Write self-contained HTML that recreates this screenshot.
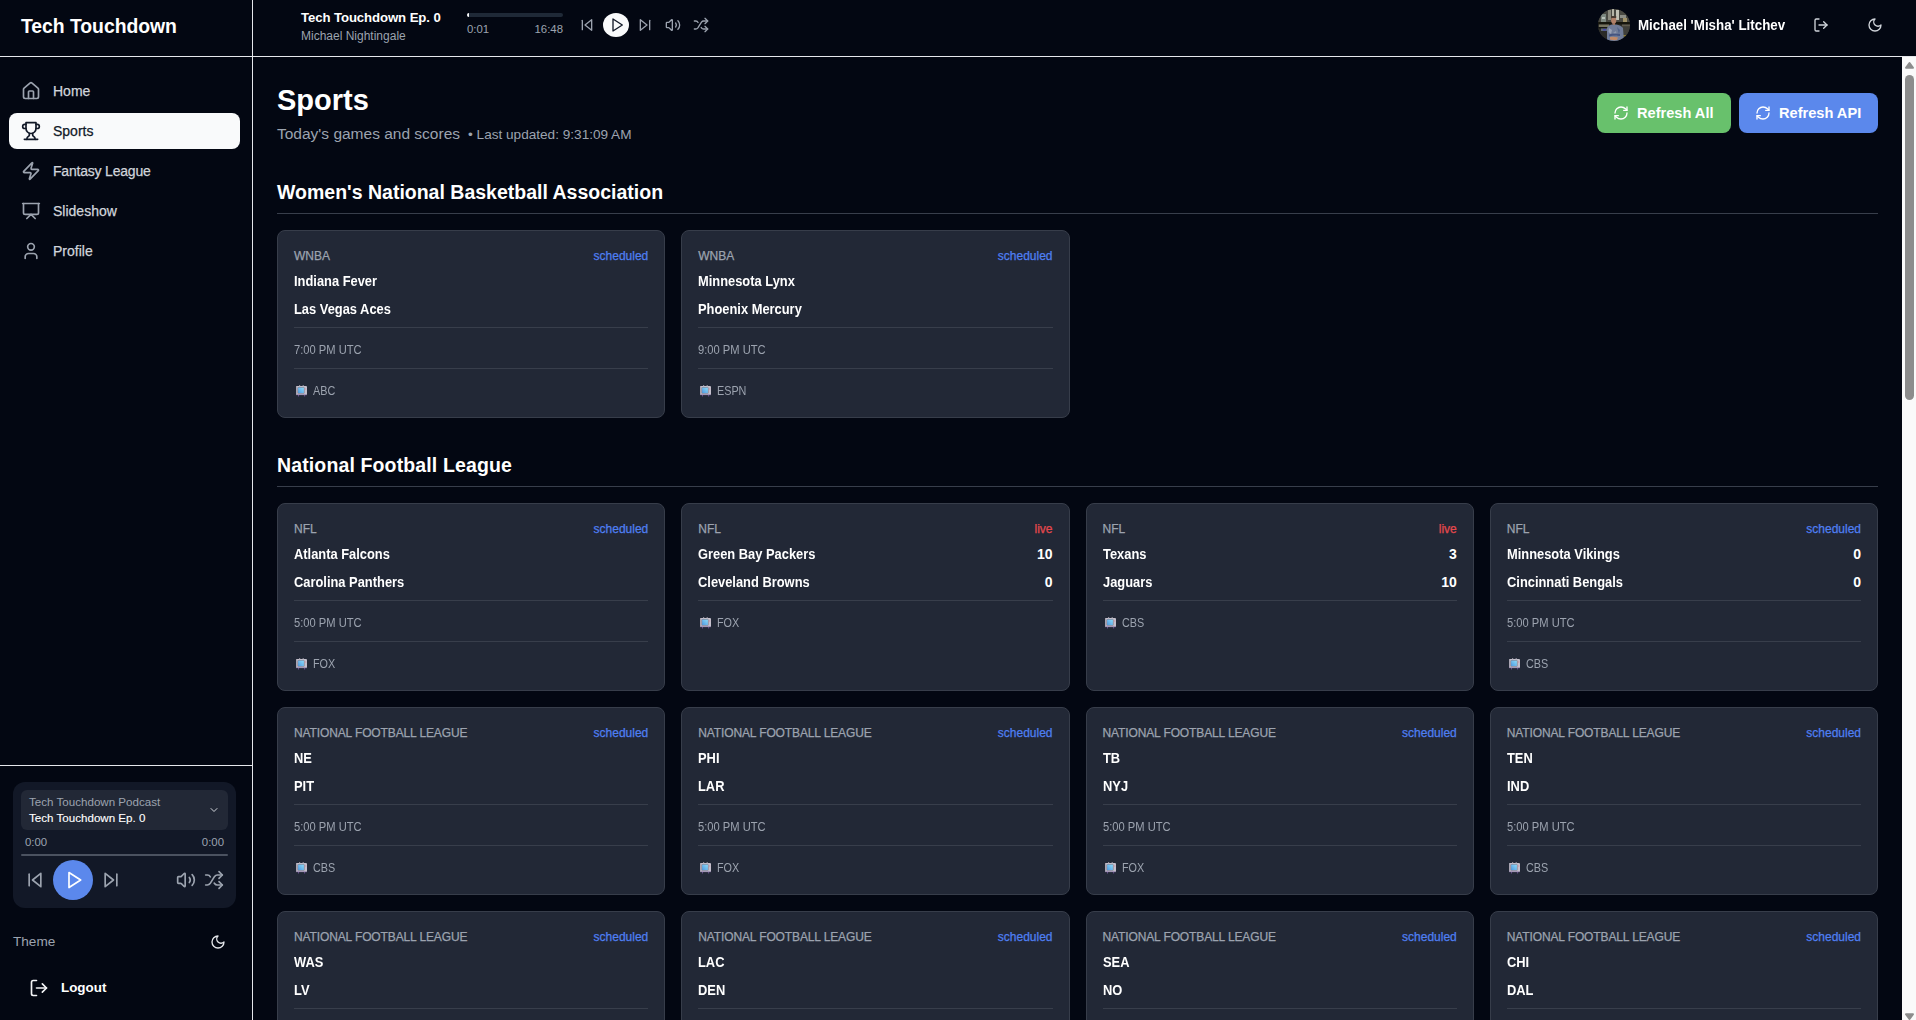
<!DOCTYPE html>
<html><head><meta charset="utf-8">
<style>
*{box-sizing:border-box;margin:0;padding:0}
html,body{width:1916px;height:1020px;overflow:hidden;background:#030712;font-family:"Liberation Sans",sans-serif;color:#f9fafb}
svg.i{fill:none;stroke:currentColor;stroke-width:2;stroke-linecap:round;stroke-linejoin:round;display:block}
.abs{position:absolute}
#sb{position:absolute;left:0;top:0;width:253px;height:1020px;border-right:1px solid #e5e7eb}
#logo{height:57px;border-bottom:1px solid #e5e7eb;position:relative}
#logo span{position:absolute;left:21px;top:14px;font-size:19.4px;font-weight:700;line-height:24px;color:#fff;letter-spacing:-0.05px}
.nav{position:absolute;left:9px;width:231px;height:36px;border-radius:8px;color:#d1d5db}
.nav svg{position:absolute;left:12px;top:8px;width:20px;height:20px;color:#9ca3af}
.nav span{position:absolute;left:44px;top:9px;font-size:14px;line-height:18px;-webkit-text-stroke:0.25px currentColor;white-space:nowrap}
.nav.act{background:#f9fafb;color:#111827}
.nav.act svg{color:#111827}
#hdr{position:absolute;left:253px;top:0;width:1663px;height:57px;border-bottom:1px solid #e5e7eb}

#main{position:absolute;left:253px;top:57px;width:1649px;height:963px;overflow:hidden}
#ttl{position:absolute;left:24px;top:25px;font-size:29px;font-weight:700;line-height:36px;color:#fff;white-space:nowrap}
#sub{position:absolute;left:24px;top:67px;font-size:15.5px;line-height:20px;color:#9ca3af;white-space:nowrap}
#upd{font-size:13.6px;margin-left:8px}
.btn{position:absolute;top:36px;height:40px;border-radius:8px;color:#fff}
.btn svg{position:absolute;left:16px;top:12px;width:16px;height:16px}
.btn span{position:absolute;left:40px;top:11px;font-size:14.6px;font-weight:700;line-height:18px;white-space:nowrap}
.sect{position:absolute;left:24px;width:1601px}
.sh{height:37px;border-bottom:1px solid #383e4b;font-size:19.5px;font-weight:700;line-height:28px;padding-top:1px;color:#fff;white-space:nowrap}
.grid{margin-top:16px;display:grid;grid-template-columns:repeat(4,1fr);gap:16px}
.card{background:#222836;border:1px solid #373d4a;border-radius:8px;padding:16px}
.ctop{height:16px;position:relative;font-size:12px;line-height:16px}
.lg{color:#9ca3af;position:absolute;left:0;top:1px;-webkit-text-stroke:0.25px #9ca3af;white-space:nowrap}
.lg.lc{letter-spacing:-0.12px}
.sch,.live{position:absolute;right:0;top:1px;color:#4f7ff2;-webkit-text-stroke:0.25px #4f7ff2}
.live{color:#e5484d;-webkit-text-stroke:0.25px #e5484d}
.team{margin-top:8px;height:20px;position:relative;font-size:14px;font-weight:700;line-height:20px;color:#fff}
.team span{position:absolute;left:0;top:0;white-space:nowrap;transform:scaleX(0.92);transform-origin:0 0}
.team b{position:absolute;right:0;top:0}
.sec{margin-top:8px;border-top:1px solid #383e4b;padding-top:12px;height:41px;position:relative}
.sec + .sec{margin-top:0}
.sec.ch{height:33px}
.tm{font-size:12px;line-height:16px;color:#9ca3af;position:absolute;left:0;top:14px;white-space:nowrap;transform:scaleX(0.93);transform-origin:0 0}
.ch span{font-size:12px;line-height:20px;color:#9ca3af;position:absolute;left:19px;top:12px;transform:scaleX(0.9);transform-origin:0 0}
.tv{position:absolute;left:2px;top:16px;width:11px;height:12px}
</style></head><body>
<div id="sb">
  <div id="logo"><span>Tech Touchdown</span></div>
  <div class="nav" style="top:73px"><svg class="i" viewBox="0 0 24 24"><path d="M15 21v-8a1 1 0 0 0-1-1h-4a1 1 0 0 0-1 1v8"/><path d="M3 10a2 2 0 0 1 .709-1.528l7-5.999a2 2 0 0 1 2.582 0l7 5.999A2 2 0 0 1 21 10v9a2 2 0 0 1-2 2H5a2 2 0 0 1-2-2z"/></svg><span>Home</span></div>
  <div class="nav act" style="top:113px"><svg class="i" viewBox="0 0 24 24"><path d="M6 9H4.5a2.5 2.5 0 0 1 0-5H6"/><path d="M18 9h1.5a2.5 2.5 0 0 0 0-5H18"/><path d="M4 22h16"/><path d="M10 14.66V17c0 .55-.47.98-.97 1.21C7.85 18.75 7 20.24 7 22"/><path d="M14 14.66V17c0 .55.47.98.97 1.21C16.150 18.75 17 20.24 17 22"/><path d="M18 2H6v7a6 6 0 0 0 12 0V2Z"/></svg><span>Sports</span></div>
  <div class="nav" style="top:153px"><svg class="i" viewBox="0 0 24 24"><path d="M4 14a1 1 0 0 1-.78-1.63l9.9-10.2a.5.5 0 0 1 .86.46l-1.92 6.02A1 1 0 0 0 13 10h7a1 1 0 0 1 .78 1.63l-9.9 10.2a.5.5 0 0 1-.86-.46l1.920-6.02A1 1 0 0 0 11 14z"/></svg><span style="letter-spacing:-0.2px">Fantasy League</span></div>
  <div class="nav" style="top:193px"><svg class="i" viewBox="0 0 24 24"><path d="M2 3h20"/><path d="M21 3v11a2 2 0 0 1-2 2H5a2 2 0 0 1-2-2V3"/><path d="m7 21 5-5 5 5"/></svg><span>Slideshow</span></div>
  <div class="nav" style="top:233px"><svg class="i" viewBox="0 0 24 24"><path d="M19 21v-2a4 4 0 0 0-4-4H9a4 4 0 0 0-4 4v2"/><circle cx="12" cy="7" r="4"/></svg><span>Profile</span></div>
  
  <div class="abs" style="left:0;top:765px;width:252px;height:1px;background:#e5e7eb"></div>
  <div class="abs" style="left:13px;top:782px;width:223px;height:126px;border-radius:12px;background:#121827"></div>
  <div class="abs" style="left:21px;top:790px;width:207px;height:40px;border-radius:6px;background:#222836"></div>
  <div class="abs" style="left:29px;top:795px;font-size:11.6px;line-height:14px;color:#9ca3af;white-space:nowrap">Tech Touchdown Podcast</div>
  <div class="abs" style="left:29px;top:811px;font-size:11.6px;line-height:14px;color:#fff;white-space:nowrap;-webkit-text-stroke:0.12px #fff">Tech Touchdown Ep. 0</div>
  <svg class="i abs" style="left:208px;top:804px;width:12px;height:12px;color:#d1d5db" viewBox="0 0 24 24"><path d="m6 9 6 6 6-6"/></svg>
  <div class="abs" style="left:25px;top:835px;font-size:11.4px;line-height:14px;color:#9ca3af">0:00</div>
  <div class="abs" style="left:200px;top:835px;width:24px;text-align:right;font-size:11.4px;line-height:14px;color:#9ca3af">0:00</div>
  <div class="abs" style="left:21px;top:854px;width:207px;height:2px;background:#4b5260;border-radius:1px"></div>
  <svg class="i abs" style="left:25px;top:870px;width:20px;height:20px;color:#9ca3af" viewBox="0 0 24 24"><polygon points="19 20 9 12 19 4 19 20"/><line x1="5" x2="5" y1="19" y2="5"/></svg>
  <div class="abs" style="left:53px;top:860px;width:40px;height:40px;border-radius:50%;background:#5b88ec"></div>
  <svg class="i abs" style="left:64px;top:870px;width:20px;height:20px;color:#fff" viewBox="0 0 24 24"><polygon points="6 3 20 12 6 21 6 3"/></svg>
  <svg class="i abs" style="left:101px;top:870px;width:20px;height:20px;color:#9ca3af" viewBox="0 0 24 24"><polygon points="5 4 15 12 5 20 5 4"/><line x1="19" x2="19" y1="5" y2="19"/></svg>
  <svg class="i abs" style="left:176px;top:870px;width:20px;height:20px;color:#9ca3af" viewBox="0 0 24 24"><path d="M11 4.702a.705.705 0 0 0-1.203-.498L6.413 7.587A1.4 1.4 0 0 1 5.416 8H3a1 1 0 0 0-1 1v6a1 1 0 0 0 1 1h2.416a1.4 1.4 0 0 1 .997.413l3.383 3.384A.705.705 0 0 0 11 19.298z"/><path d="M16 9a5 5 0 0 1 0 6"/><path d="M19.364 18.364a9 9 0 0 0 0-12.728"/></svg>
  <svg class="i abs" style="left:204px;top:870px;width:20px;height:20px;color:#9ca3af" viewBox="0 0 24 24"><path d="m18 14 4 4-4 4"/><path d="m18 2 4 4-4 4"/><path d="M2 18h1.973a4 4 0 0 0 3.3-1.7l5.454-8.6a4 4 0 0 1 3.3-1.7H22"/><path d="M2 6h1.972a4 4 0 0 1 3.6 2.2"/><path d="M22 18h-6.041a4 4 0 0 1-3.3-1.8l-.359-.45"/></svg>
  <div class="abs" style="left:13px;top:934px;font-size:13.6px;line-height:16px;color:#9ca3af">Theme</div>
  <svg class="i abs" style="left:210px;top:934px;width:16px;height:16px;color:#e5e7eb" viewBox="0 0 24 24"><path d="M12 3a6 6 0 0 0 9 9 9 9 0 1 1-9-9Z"/></svg>
  <svg class="i abs" style="left:29px;top:978px;width:20px;height:20px;color:#f3f4f6" viewBox="0 0 24 24"><path d="M9 21H5a2 2 0 0 1-2-2V5a2 2 0 0 1 2-2h4"/><polyline points="16 17 21 12 16 7"/><line x1="21" x2="9" y1="12" y2="12"/></svg>
  <div class="abs" style="left:61px;top:980px;font-size:13.4px;font-weight:700;line-height:16px;color:#fff">Logout</div>

</div>
<div id="hdr">
  
  <div class="abs" style="left:48px;top:9px;font-size:13.2px;font-weight:700;line-height:17px;color:#fff;letter-spacing:-0.1px;white-space:nowrap">Tech Touchdown Ep. 0</div>
  <div class="abs" style="left:48px;top:29px;font-size:12px;line-height:14px;color:#9ca3af;white-space:nowrap">Michael Nightingale</div>
  <div class="abs" style="left:214px;top:13px;width:96px;height:4px;border-radius:2px;background:#1f2937;overflow:hidden"><div style="width:2px;height:4px;background:#f9fafb"></div></div>
  <div class="abs" style="left:214px;top:22px;width:96px;font-size:11.4px;line-height:14px;color:#9ca3af;white-space:nowrap">0:01<span style="position:absolute;right:0;top:0">16:48</span></div>
  <svg class="i abs" style="left:326px;top:17px;width:16px;height:16px;color:#9ca3af" viewBox="0 0 24 24"><polygon points="19 20 9 12 19 4 19 20"/><line x1="5" x2="5" y1="19" y2="5"/></svg>
  <div class="abs" style="left:350px;top:13px;width:26px;height:24px;border-radius:50%;background:#f9fafb"></div>
  <svg class="i abs" style="left:356px;top:17px;width:16px;height:16px;color:#111827" viewBox="0 0 24 24"><polygon points="6 3 20 12 6 21 6 3"/></svg>
  <svg class="i abs" style="left:384px;top:17px;width:16px;height:16px;color:#9ca3af" viewBox="0 0 24 24"><polygon points="5 4 15 12 5 20 5 4"/><line x1="19" x2="19" y1="5" y2="19"/></svg>
  <svg class="i abs" style="left:412px;top:17px;width:16px;height:16px;color:#9ca3af" viewBox="0 0 24 24"><path d="M11 4.702a.705.705 0 0 0-1.203-.498L6.413 7.587A1.4 1.4 0 0 1 5.416 8H3a1 1 0 0 0-1 1v6a1 1 0 0 0 1 1h2.416a1.4 1.4 0 0 1 .997.413l3.383 3.384A.705.705 0 0 0 11 19.298z"/><path d="M16 9a5 5 0 0 1 0 6"/><path d="M19.364 18.364a9 9 0 0 0 0-12.728"/></svg>
  <svg class="i abs" style="left:440px;top:17px;width:16px;height:16px;color:#9ca3af" viewBox="0 0 24 24"><path d="m18 14 4 4-4 4"/><path d="m18 2 4 4-4 4"/><path d="M2 18h1.973a4 4 0 0 0 3.3-1.7l5.454-8.6a4 4 0 0 1 3.3-1.7H22"/><path d="M2 6h1.972a4 4 0 0 1 3.6 2.2"/><path d="M22 18h-6.041a4 4 0 0 1-3.3-1.8l-.359-.45"/></svg>
  <div class="abs" style="left:1345px;top:9px;width:32px;height:32px;border-radius:50%;overflow:hidden;background:#2e2e2a"><svg width="32" height="32" viewBox="0 0 32 32" style="display:block"><defs><filter id="bl" x="-10%" y="-10%" width="120%" height="120%"><feGaussianBlur stdDeviation="0.5"/></filter></defs><g filter="url(#bl)">
<rect width="32" height="32" fill="#2e2e2a"/>
<rect x="0" y="0" width="32" height="13" fill="#4a4a42"/>
<rect x="3" y="5" width="5" height="8" fill="#7d8880"/>
<rect x="4" y="8" width="3" height="2" fill="#b8c0b8"/>
<rect x="10" y="1" width="3" height="10" fill="#8a897c"/>
<rect x="14" y="0" width="2" height="8" fill="#b5b4a6"/>
<rect x="18" y="1" width="3" height="10" fill="#c2c1b4"/>
<rect x="22" y="6" width="6" height="3" fill="#8c8e86"/>
<rect x="25" y="9" width="4" height="5" fill="#a09268"/>
<rect x="0" y="13" width="32" height="2.5" fill="#121210"/>
<rect x="1" y="15.5" width="10" height="2.5" fill="#77745f"/>
<rect x="24" y="15.5" width="8" height="2" fill="#5f5b50"/>
<rect x="0" y="18" width="10" height="1.5" fill="#161614"/>
<rect x="3" y="19.5" width="7" height="2.5" fill="#5d6a78"/>
<rect x="5" y="20" width="3" height="1.5" fill="#4848b0"/>
<rect x="0" y="22" width="10" height="10" fill="#2a2a26"/>
<rect x="24" y="18" width="8" height="14" fill="#3f413b"/>
<rect x="25" y="26" width="5" height="1.5" fill="#8c7a36"/>
<path d="M9 32 L9 19 Q10 16 14 15.5 L18 15.5 Q23 16 25 19 L26 32 Z" fill="#6f7c98"/>
<path d="M11 19 L14 21 L13 25 L10.5 23 Z" fill="#98a2b6"/>
<path d="M19 18 L22 21 L21 25 Z" fill="#53638a"/>
<path d="M15 24 L18 22 L19 27 Z" fill="#8e98ae"/>
<ellipse cx="15.7" cy="11.3" rx="2.6" ry="3.6" fill="#b08068"/>
<rect x="13.2" y="7" width="5" height="2" fill="#4a3a30"/>
<rect x="14.6" y="14" width="2.4" height="2" fill="#9c7460"/>
<path d="M11 25.5 Q16 24 22 25 L22 27 Q16 26 11 27.5 Z" fill="#445480"/>
<path d="M12 28 Q16 27.5 20 28.5 L19 31 Q15 31.5 12 30.5 Z" fill="#c08a68"/>
</g></svg></div>
  <div class="abs" style="left:1385px;top:17px;font-size:14.2px;font-weight:700;line-height:17px;color:#fff;white-space:nowrap;transform:scaleX(0.94);transform-origin:0 0">Michael 'Misha' Litchev</div>
  <svg class="i abs" style="left:1560px;top:17px;width:16px;height:16px;color:#d1d5db" viewBox="0 0 24 24"><path d="M9 21H5a2 2 0 0 1-2-2V5a2 2 0 0 1 2-2h4"/><polyline points="16 17 21 12 16 7"/><line x1="21" x2="9" y1="12" y2="12"/></svg>
  <svg class="i abs" style="left:1614px;top:17px;width:16px;height:16px;color:#d1d5db" viewBox="0 0 24 24"><path d="M12 3a6 6 0 0 0 9 9 9 9 0 1 1-9-9Z"/></svg>

</div>
<div id="main">
  
  <div id="ttl">Sports</div>
  <div id="sub">Today's games and scores<span id="upd">&bull; Last updated: 9:31:09 AM</span></div>
  <div class="btn" style="left:1344px;width:134px;background:#68c16c"><svg class="i" viewBox="0 0 24 24"><path d="M3 12a9 9 0 0 1 9-9 9.75 9.75 0 0 1 6.74 2.74L21 8"/><path d="M21 3v5h-5"/><path d="M21 12a9 9 0 0 1-9 9 9.75 9.75 0 0 1-6.74-2.74L3 16"/><path d="M8 16H3v5"/></svg><span>Refresh All</span></div>
  <div class="btn" style="left:1486px;width:139px;background:#5b88ec"><svg class="i" viewBox="0 0 24 24"><path d="M3 12a9 9 0 0 1 9-9 9.75 9.75 0 0 1 6.74 2.74L21 8"/><path d="M21 3v5h-5"/><path d="M21 12a9 9 0 0 1-9 9 9.75 9.75 0 0 1-6.74-2.74L3 16"/><path d="M8 16H3v5"/></svg><span>Refresh API</span></div>
  <div class="sect" style="top:120px"><div class="sh">Women's National Basketball Association</div><div class="grid"><div class="card"><div class="ctop"><span class="lg">WNBA</span><span class="sch">scheduled</span></div><div class="team"><span>Indiana Fever</span></div><div class="team t2"><span>Las Vegas Aces</span></div><div class="sec"><span class="tm">7:00 PM UTC</span></div><div class="sec ch"><svg class="tv" viewBox="0 0 11 12"><defs><linearGradient id="scr" x1="0" y1="1" x2="1" y2="0"><stop offset="0" stop-color="#4f9ae0"/><stop offset="1" stop-color="#8edcfa"/></linearGradient></defs><rect x="0" y="1" width="11" height="9" rx="1" fill="#c4c0cc"/><rect x="0" y="1.5" width="1.2" height="8" fill="#a9a5b2"/><rect x="1.6" y="2.2" width="6.8" height="6.3" rx="0.5" fill="#6f6a7c"/><rect x="2.1" y="2.6" width="5.8" height="5.5" fill="url(#scr)"/><rect x="9.2" y="3.6" width="1" height="0.8" fill="#e0708a"/><rect x="0" y="9.2" width="11" height="0.9" fill="#9b8db0"/><rect x="3" y="0.2" width="1.2" height="1.2" fill="#aaa6b4"/><rect x="6.6" y="0.2" width="1.2" height="1.2" fill="#aaa6b4"/><rect x="2" y="10" width="0.8" height="1.5" fill="#7a5aa6"/><rect x="8.3" y="10" width="0.8" height="1.5" fill="#7a5aa6"/></svg><span>ABC</span></div></div><div class="card"><div class="ctop"><span class="lg">WNBA</span><span class="sch">scheduled</span></div><div class="team"><span>Minnesota Lynx</span></div><div class="team t2"><span>Phoenix Mercury</span></div><div class="sec"><span class="tm">9:00 PM UTC</span></div><div class="sec ch"><svg class="tv" viewBox="0 0 11 12"><defs><linearGradient id="scr" x1="0" y1="1" x2="1" y2="0"><stop offset="0" stop-color="#4f9ae0"/><stop offset="1" stop-color="#8edcfa"/></linearGradient></defs><rect x="0" y="1" width="11" height="9" rx="1" fill="#c4c0cc"/><rect x="0" y="1.5" width="1.2" height="8" fill="#a9a5b2"/><rect x="1.6" y="2.2" width="6.8" height="6.3" rx="0.5" fill="#6f6a7c"/><rect x="2.1" y="2.6" width="5.8" height="5.5" fill="url(#scr)"/><rect x="9.2" y="3.6" width="1" height="0.8" fill="#e0708a"/><rect x="0" y="9.2" width="11" height="0.9" fill="#9b8db0"/><rect x="3" y="0.2" width="1.2" height="1.2" fill="#aaa6b4"/><rect x="6.6" y="0.2" width="1.2" height="1.2" fill="#aaa6b4"/><rect x="2" y="10" width="0.8" height="1.5" fill="#7a5aa6"/><rect x="8.3" y="10" width="0.8" height="1.5" fill="#7a5aa6"/></svg><span>ESPN</span></div></div></div></div>
  <div class="sect" style="top:393px"><div class="sh" style="letter-spacing:0.13px">National Football League</div><div class="grid"><div class="card"><div class="ctop"><span class="lg">NFL</span><span class="sch">scheduled</span></div><div class="team"><span>Atlanta Falcons</span></div><div class="team t2"><span>Carolina Panthers</span></div><div class="sec"><span class="tm">5:00 PM UTC</span></div><div class="sec ch"><svg class="tv" viewBox="0 0 11 12"><defs><linearGradient id="scr" x1="0" y1="1" x2="1" y2="0"><stop offset="0" stop-color="#4f9ae0"/><stop offset="1" stop-color="#8edcfa"/></linearGradient></defs><rect x="0" y="1" width="11" height="9" rx="1" fill="#c4c0cc"/><rect x="0" y="1.5" width="1.2" height="8" fill="#a9a5b2"/><rect x="1.6" y="2.2" width="6.8" height="6.3" rx="0.5" fill="#6f6a7c"/><rect x="2.1" y="2.6" width="5.8" height="5.5" fill="url(#scr)"/><rect x="9.2" y="3.6" width="1" height="0.8" fill="#e0708a"/><rect x="0" y="9.2" width="11" height="0.9" fill="#9b8db0"/><rect x="3" y="0.2" width="1.2" height="1.2" fill="#aaa6b4"/><rect x="6.6" y="0.2" width="1.2" height="1.2" fill="#aaa6b4"/><rect x="2" y="10" width="0.8" height="1.5" fill="#7a5aa6"/><rect x="8.3" y="10" width="0.8" height="1.5" fill="#7a5aa6"/></svg><span>FOX</span></div></div><div class="card"><div class="ctop"><span class="lg">NFL</span><span class="live">live</span></div><div class="team"><span>Green Bay Packers</span><b>10</b></div><div class="team t2"><span>Cleveland Browns</span><b>0</b></div><div class="sec ch"><svg class="tv" viewBox="0 0 11 12"><defs><linearGradient id="scr" x1="0" y1="1" x2="1" y2="0"><stop offset="0" stop-color="#4f9ae0"/><stop offset="1" stop-color="#8edcfa"/></linearGradient></defs><rect x="0" y="1" width="11" height="9" rx="1" fill="#c4c0cc"/><rect x="0" y="1.5" width="1.2" height="8" fill="#a9a5b2"/><rect x="1.6" y="2.2" width="6.8" height="6.3" rx="0.5" fill="#6f6a7c"/><rect x="2.1" y="2.6" width="5.8" height="5.5" fill="url(#scr)"/><rect x="9.2" y="3.6" width="1" height="0.8" fill="#e0708a"/><rect x="0" y="9.2" width="11" height="0.9" fill="#9b8db0"/><rect x="3" y="0.2" width="1.2" height="1.2" fill="#aaa6b4"/><rect x="6.6" y="0.2" width="1.2" height="1.2" fill="#aaa6b4"/><rect x="2" y="10" width="0.8" height="1.5" fill="#7a5aa6"/><rect x="8.3" y="10" width="0.8" height="1.5" fill="#7a5aa6"/></svg><span>FOX</span></div></div><div class="card"><div class="ctop"><span class="lg">NFL</span><span class="live">live</span></div><div class="team"><span>Texans</span><b>3</b></div><div class="team t2"><span>Jaguars</span><b>10</b></div><div class="sec ch"><svg class="tv" viewBox="0 0 11 12"><defs><linearGradient id="scr" x1="0" y1="1" x2="1" y2="0"><stop offset="0" stop-color="#4f9ae0"/><stop offset="1" stop-color="#8edcfa"/></linearGradient></defs><rect x="0" y="1" width="11" height="9" rx="1" fill="#c4c0cc"/><rect x="0" y="1.5" width="1.2" height="8" fill="#a9a5b2"/><rect x="1.6" y="2.2" width="6.8" height="6.3" rx="0.5" fill="#6f6a7c"/><rect x="2.1" y="2.6" width="5.8" height="5.5" fill="url(#scr)"/><rect x="9.2" y="3.6" width="1" height="0.8" fill="#e0708a"/><rect x="0" y="9.2" width="11" height="0.9" fill="#9b8db0"/><rect x="3" y="0.2" width="1.2" height="1.2" fill="#aaa6b4"/><rect x="6.6" y="0.2" width="1.2" height="1.2" fill="#aaa6b4"/><rect x="2" y="10" width="0.8" height="1.5" fill="#7a5aa6"/><rect x="8.3" y="10" width="0.8" height="1.5" fill="#7a5aa6"/></svg><span>CBS</span></div></div><div class="card"><div class="ctop"><span class="lg">NFL</span><span class="sch">scheduled</span></div><div class="team"><span>Minnesota Vikings</span><b>0</b></div><div class="team t2"><span>Cincinnati Bengals</span><b>0</b></div><div class="sec"><span class="tm">5:00 PM UTC</span></div><div class="sec ch"><svg class="tv" viewBox="0 0 11 12"><defs><linearGradient id="scr" x1="0" y1="1" x2="1" y2="0"><stop offset="0" stop-color="#4f9ae0"/><stop offset="1" stop-color="#8edcfa"/></linearGradient></defs><rect x="0" y="1" width="11" height="9" rx="1" fill="#c4c0cc"/><rect x="0" y="1.5" width="1.2" height="8" fill="#a9a5b2"/><rect x="1.6" y="2.2" width="6.8" height="6.3" rx="0.5" fill="#6f6a7c"/><rect x="2.1" y="2.6" width="5.8" height="5.5" fill="url(#scr)"/><rect x="9.2" y="3.6" width="1" height="0.8" fill="#e0708a"/><rect x="0" y="9.2" width="11" height="0.9" fill="#9b8db0"/><rect x="3" y="0.2" width="1.2" height="1.2" fill="#aaa6b4"/><rect x="6.6" y="0.2" width="1.2" height="1.2" fill="#aaa6b4"/><rect x="2" y="10" width="0.8" height="1.5" fill="#7a5aa6"/><rect x="8.3" y="10" width="0.8" height="1.5" fill="#7a5aa6"/></svg><span>CBS</span></div></div><div class="card"><div class="ctop"><span class="lg lc">NATIONAL FOOTBALL LEAGUE</span><span class="sch">scheduled</span></div><div class="team"><span>NE</span></div><div class="team t2"><span>PIT</span></div><div class="sec"><span class="tm">5:00 PM UTC</span></div><div class="sec ch"><svg class="tv" viewBox="0 0 11 12"><defs><linearGradient id="scr" x1="0" y1="1" x2="1" y2="0"><stop offset="0" stop-color="#4f9ae0"/><stop offset="1" stop-color="#8edcfa"/></linearGradient></defs><rect x="0" y="1" width="11" height="9" rx="1" fill="#c4c0cc"/><rect x="0" y="1.5" width="1.2" height="8" fill="#a9a5b2"/><rect x="1.6" y="2.2" width="6.8" height="6.3" rx="0.5" fill="#6f6a7c"/><rect x="2.1" y="2.6" width="5.8" height="5.5" fill="url(#scr)"/><rect x="9.2" y="3.6" width="1" height="0.8" fill="#e0708a"/><rect x="0" y="9.2" width="11" height="0.9" fill="#9b8db0"/><rect x="3" y="0.2" width="1.2" height="1.2" fill="#aaa6b4"/><rect x="6.6" y="0.2" width="1.2" height="1.2" fill="#aaa6b4"/><rect x="2" y="10" width="0.8" height="1.5" fill="#7a5aa6"/><rect x="8.3" y="10" width="0.8" height="1.5" fill="#7a5aa6"/></svg><span>CBS</span></div></div><div class="card"><div class="ctop"><span class="lg lc">NATIONAL FOOTBALL LEAGUE</span><span class="sch">scheduled</span></div><div class="team"><span>PHI</span></div><div class="team t2"><span>LAR</span></div><div class="sec"><span class="tm">5:00 PM UTC</span></div><div class="sec ch"><svg class="tv" viewBox="0 0 11 12"><defs><linearGradient id="scr" x1="0" y1="1" x2="1" y2="0"><stop offset="0" stop-color="#4f9ae0"/><stop offset="1" stop-color="#8edcfa"/></linearGradient></defs><rect x="0" y="1" width="11" height="9" rx="1" fill="#c4c0cc"/><rect x="0" y="1.5" width="1.2" height="8" fill="#a9a5b2"/><rect x="1.6" y="2.2" width="6.8" height="6.3" rx="0.5" fill="#6f6a7c"/><rect x="2.1" y="2.6" width="5.8" height="5.5" fill="url(#scr)"/><rect x="9.2" y="3.6" width="1" height="0.8" fill="#e0708a"/><rect x="0" y="9.2" width="11" height="0.9" fill="#9b8db0"/><rect x="3" y="0.2" width="1.2" height="1.2" fill="#aaa6b4"/><rect x="6.6" y="0.2" width="1.2" height="1.2" fill="#aaa6b4"/><rect x="2" y="10" width="0.8" height="1.5" fill="#7a5aa6"/><rect x="8.3" y="10" width="0.8" height="1.5" fill="#7a5aa6"/></svg><span>FOX</span></div></div><div class="card"><div class="ctop"><span class="lg lc">NATIONAL FOOTBALL LEAGUE</span><span class="sch">scheduled</span></div><div class="team"><span>TB</span></div><div class="team t2"><span>NYJ</span></div><div class="sec"><span class="tm">5:00 PM UTC</span></div><div class="sec ch"><svg class="tv" viewBox="0 0 11 12"><defs><linearGradient id="scr" x1="0" y1="1" x2="1" y2="0"><stop offset="0" stop-color="#4f9ae0"/><stop offset="1" stop-color="#8edcfa"/></linearGradient></defs><rect x="0" y="1" width="11" height="9" rx="1" fill="#c4c0cc"/><rect x="0" y="1.5" width="1.2" height="8" fill="#a9a5b2"/><rect x="1.6" y="2.2" width="6.8" height="6.3" rx="0.5" fill="#6f6a7c"/><rect x="2.1" y="2.6" width="5.8" height="5.5" fill="url(#scr)"/><rect x="9.2" y="3.6" width="1" height="0.8" fill="#e0708a"/><rect x="0" y="9.2" width="11" height="0.9" fill="#9b8db0"/><rect x="3" y="0.2" width="1.2" height="1.2" fill="#aaa6b4"/><rect x="6.6" y="0.2" width="1.2" height="1.2" fill="#aaa6b4"/><rect x="2" y="10" width="0.8" height="1.5" fill="#7a5aa6"/><rect x="8.3" y="10" width="0.8" height="1.5" fill="#7a5aa6"/></svg><span>FOX</span></div></div><div class="card"><div class="ctop"><span class="lg lc">NATIONAL FOOTBALL LEAGUE</span><span class="sch">scheduled</span></div><div class="team"><span>TEN</span></div><div class="team t2"><span>IND</span></div><div class="sec"><span class="tm">5:00 PM UTC</span></div><div class="sec ch"><svg class="tv" viewBox="0 0 11 12"><defs><linearGradient id="scr" x1="0" y1="1" x2="1" y2="0"><stop offset="0" stop-color="#4f9ae0"/><stop offset="1" stop-color="#8edcfa"/></linearGradient></defs><rect x="0" y="1" width="11" height="9" rx="1" fill="#c4c0cc"/><rect x="0" y="1.5" width="1.2" height="8" fill="#a9a5b2"/><rect x="1.6" y="2.2" width="6.8" height="6.3" rx="0.5" fill="#6f6a7c"/><rect x="2.1" y="2.6" width="5.8" height="5.5" fill="url(#scr)"/><rect x="9.2" y="3.6" width="1" height="0.8" fill="#e0708a"/><rect x="0" y="9.2" width="11" height="0.9" fill="#9b8db0"/><rect x="3" y="0.2" width="1.2" height="1.2" fill="#aaa6b4"/><rect x="6.6" y="0.2" width="1.2" height="1.2" fill="#aaa6b4"/><rect x="2" y="10" width="0.8" height="1.5" fill="#7a5aa6"/><rect x="8.3" y="10" width="0.8" height="1.5" fill="#7a5aa6"/></svg><span>CBS</span></div></div><div class="card"><div class="ctop"><span class="lg lc">NATIONAL FOOTBALL LEAGUE</span><span class="sch">scheduled</span></div><div class="team"><span>WAS</span></div><div class="team t2"><span>LV</span></div><div class="sec"><span class="tm">5:00 PM UTC</span></div><div class="sec ch"><svg class="tv" viewBox="0 0 11 12"><defs><linearGradient id="scr" x1="0" y1="1" x2="1" y2="0"><stop offset="0" stop-color="#4f9ae0"/><stop offset="1" stop-color="#8edcfa"/></linearGradient></defs><rect x="0" y="1" width="11" height="9" rx="1" fill="#c4c0cc"/><rect x="0" y="1.5" width="1.2" height="8" fill="#a9a5b2"/><rect x="1.6" y="2.2" width="6.8" height="6.3" rx="0.5" fill="#6f6a7c"/><rect x="2.1" y="2.6" width="5.8" height="5.5" fill="url(#scr)"/><rect x="9.2" y="3.6" width="1" height="0.8" fill="#e0708a"/><rect x="0" y="9.2" width="11" height="0.9" fill="#9b8db0"/><rect x="3" y="0.2" width="1.2" height="1.2" fill="#aaa6b4"/><rect x="6.6" y="0.2" width="1.2" height="1.2" fill="#aaa6b4"/><rect x="2" y="10" width="0.8" height="1.5" fill="#7a5aa6"/><rect x="8.3" y="10" width="0.8" height="1.5" fill="#7a5aa6"/></svg><span>CBS</span></div></div><div class="card"><div class="ctop"><span class="lg lc">NATIONAL FOOTBALL LEAGUE</span><span class="sch">scheduled</span></div><div class="team"><span>LAC</span></div><div class="team t2"><span>DEN</span></div><div class="sec"><span class="tm">5:00 PM UTC</span></div><div class="sec ch"><svg class="tv" viewBox="0 0 11 12"><defs><linearGradient id="scr" x1="0" y1="1" x2="1" y2="0"><stop offset="0" stop-color="#4f9ae0"/><stop offset="1" stop-color="#8edcfa"/></linearGradient></defs><rect x="0" y="1" width="11" height="9" rx="1" fill="#c4c0cc"/><rect x="0" y="1.5" width="1.2" height="8" fill="#a9a5b2"/><rect x="1.6" y="2.2" width="6.8" height="6.3" rx="0.5" fill="#6f6a7c"/><rect x="2.1" y="2.6" width="5.8" height="5.5" fill="url(#scr)"/><rect x="9.2" y="3.6" width="1" height="0.8" fill="#e0708a"/><rect x="0" y="9.2" width="11" height="0.9" fill="#9b8db0"/><rect x="3" y="0.2" width="1.2" height="1.2" fill="#aaa6b4"/><rect x="6.6" y="0.2" width="1.2" height="1.2" fill="#aaa6b4"/><rect x="2" y="10" width="0.8" height="1.5" fill="#7a5aa6"/><rect x="8.3" y="10" width="0.8" height="1.5" fill="#7a5aa6"/></svg><span>FOX</span></div></div><div class="card"><div class="ctop"><span class="lg lc">NATIONAL FOOTBALL LEAGUE</span><span class="sch">scheduled</span></div><div class="team"><span>SEA</span></div><div class="team t2"><span>NO</span></div><div class="sec"><span class="tm">5:00 PM UTC</span></div><div class="sec ch"><svg class="tv" viewBox="0 0 11 12"><defs><linearGradient id="scr" x1="0" y1="1" x2="1" y2="0"><stop offset="0" stop-color="#4f9ae0"/><stop offset="1" stop-color="#8edcfa"/></linearGradient></defs><rect x="0" y="1" width="11" height="9" rx="1" fill="#c4c0cc"/><rect x="0" y="1.5" width="1.2" height="8" fill="#a9a5b2"/><rect x="1.6" y="2.2" width="6.8" height="6.3" rx="0.5" fill="#6f6a7c"/><rect x="2.1" y="2.6" width="5.8" height="5.5" fill="url(#scr)"/><rect x="9.2" y="3.6" width="1" height="0.8" fill="#e0708a"/><rect x="0" y="9.2" width="11" height="0.9" fill="#9b8db0"/><rect x="3" y="0.2" width="1.2" height="1.2" fill="#aaa6b4"/><rect x="6.6" y="0.2" width="1.2" height="1.2" fill="#aaa6b4"/><rect x="2" y="10" width="0.8" height="1.5" fill="#7a5aa6"/><rect x="8.3" y="10" width="0.8" height="1.5" fill="#7a5aa6"/></svg><span>FOX</span></div></div><div class="card"><div class="ctop"><span class="lg lc">NATIONAL FOOTBALL LEAGUE</span><span class="sch">scheduled</span></div><div class="team"><span>CHI</span></div><div class="team t2"><span>DAL</span></div><div class="sec"><span class="tm">5:00 PM UTC</span></div><div class="sec ch"><svg class="tv" viewBox="0 0 11 12"><defs><linearGradient id="scr" x1="0" y1="1" x2="1" y2="0"><stop offset="0" stop-color="#4f9ae0"/><stop offset="1" stop-color="#8edcfa"/></linearGradient></defs><rect x="0" y="1" width="11" height="9" rx="1" fill="#c4c0cc"/><rect x="0" y="1.5" width="1.2" height="8" fill="#a9a5b2"/><rect x="1.6" y="2.2" width="6.8" height="6.3" rx="0.5" fill="#6f6a7c"/><rect x="2.1" y="2.6" width="5.8" height="5.5" fill="url(#scr)"/><rect x="9.2" y="3.6" width="1" height="0.8" fill="#e0708a"/><rect x="0" y="9.2" width="11" height="0.9" fill="#9b8db0"/><rect x="3" y="0.2" width="1.2" height="1.2" fill="#aaa6b4"/><rect x="6.6" y="0.2" width="1.2" height="1.2" fill="#aaa6b4"/><rect x="2" y="10" width="0.8" height="1.5" fill="#7a5aa6"/><rect x="8.3" y="10" width="0.8" height="1.5" fill="#7a5aa6"/></svg><span>CBS</span></div></div></div></div>

</div>
<div class="abs" style="left:1902px;top:57px;width:14px;height:963px;background:#fafafa"></div>
<svg class="abs" style="left:1902px;top:57px" width="14" height="15"><polygon points="4,10.8 7.5,6 11,10.8" fill="#8c8c8c" stroke="#8c8c8c" stroke-width="2" stroke-linejoin="round"/></svg>
<div class="abs" style="left:1905px;top:75px;width:9px;height:325px;border-radius:4.5px;background:#8c8c8c"></div>
<svg class="abs" style="left:1902px;top:1010px" width="14" height="15"><polygon points="4,4.2 11,4.2 7.5,9" fill="#8c8c8c" stroke="#8c8c8c" stroke-width="2" stroke-linejoin="round"/></svg>
</body></html>
